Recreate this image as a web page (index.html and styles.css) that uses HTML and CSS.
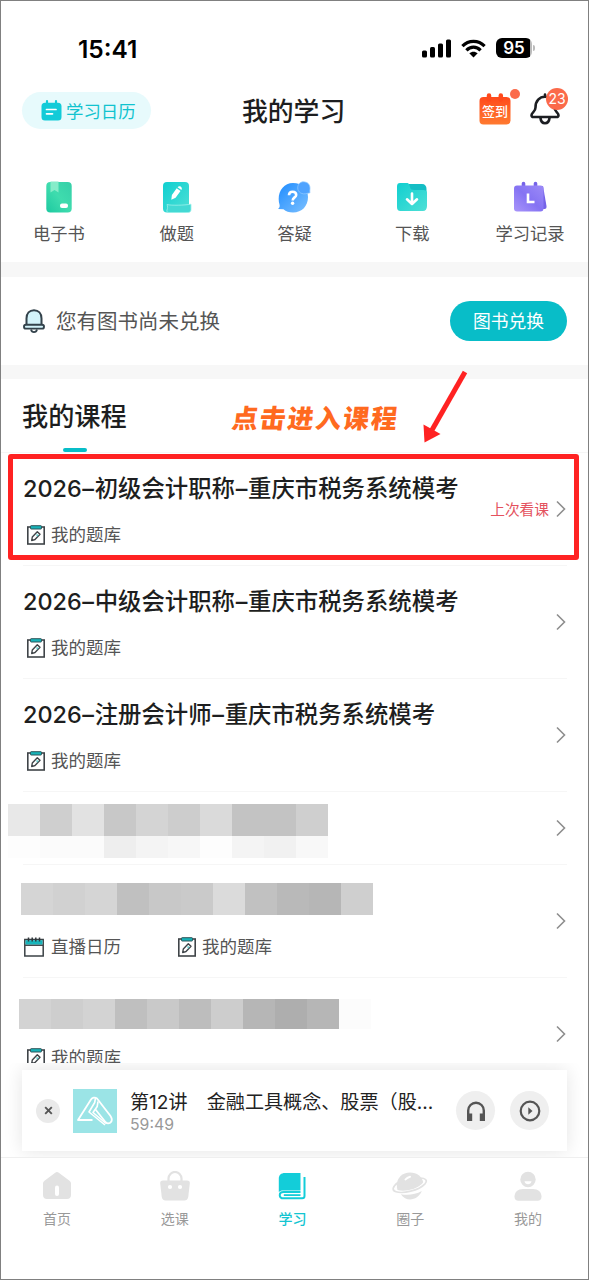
FILE: index.html
```html
<!DOCTYPE html>
<html lang="zh-CN">
<head>
<meta charset="utf-8">
<title>我的学习</title>
<link rel="stylesheet" href="styles.css">
</head>
<body>
<svg class="defs" width="0" height="0" aria-hidden="true">
  <defs>
    <linearGradient id="gGreen" x1="0" y1="1" x2="1" y2="0"><stop offset="0" stop-color="#1cc9a0"/><stop offset=".5" stop-color="#3fdcae"/><stop offset="1" stop-color="#35cfa8"/></linearGradient>
    <linearGradient id="gTeal" x1="0" y1="0" x2="1" y2="1"><stop offset="0" stop-color="#10cfd0"/><stop offset="1" stop-color="#4fe0d6"/></linearGradient>
    <linearGradient id="gBlue" x1="0" y1="0" x2="1" y2="1"><stop offset="0" stop-color="#1e8cff"/><stop offset="1" stop-color="#7cc0ff"/></linearGradient>
    <linearGradient id="gPurple" x1="0" y1="1" x2="1" y2="0"><stop offset="0" stop-color="#a995fa"/><stop offset=".5" stop-color="#8573f3"/><stop offset="1" stop-color="#9c8bf7"/></linearGradient>
    <linearGradient id="gOrange" x1="0" y1="0" x2="0" y2="1"><stop offset="0" stop-color="#ff4a1c"/><stop offset="1" stop-color="#ff7a30"/></linearGradient>
    <symbol id="bank" viewBox="0 0 18 20">
      <rect x=".8" y="2" width="16.400" height="17" fill="#fff" stroke="#3f4448" stroke-width="1.600"/>
      <rect x="3.500" y=".7" width="11" height="3.300" rx=".6" fill="#17b3b8" stroke="#2f555a" stroke-width="1"/>
      <path d="M4.700 15.600l.6-3.600 5-5.200 2.700 2.500-5 5.200z" fill="#fff" stroke="#3f4448" stroke-width="1.400" stroke-linejoin="round"/>
      <path d="M9.500 9.500l1.500 1.400" stroke="#5fd0d0" stroke-width="1.600"/>
    </symbol>
    <symbol id="chev" viewBox="0 0 10 18"><path d="M1 1.500L8.500 9 1 16.500" fill="none" stroke="#8e8e8e" stroke-width="1.600"/></symbol>
  </defs>
</svg>
<div class="phone">
  <div class="status">
    <span class="clock">15:41</span>
    <span class="signals">
      <svg width="29" height="19" viewBox="0 0 29 19"><rect x="0" y="11.500" width="5" height="7" rx="1.500"/><rect x="8" y="8" width="5" height="10.500" rx="1.500"/><rect x="16" y="4.500" width="5" height="14" rx="1.500"/><rect x="24" y=".5" width="5" height="18" rx="1.500"/></svg>
      <svg class="wifi" width="25" height="19" viewBox="0 0 25 19"><g fill="none" stroke="#000" stroke-width="3.200"><path d="M1.400 7.200C7.600.8 17.400.8 23.600 7.200"/><path d="M5.400 11.300c4-4.200 10.200-4.200 14.200 0"/></g><path d="M8.300 14.300c2.500-2.100 5.900-2.100 8.400 0L12.500 18.500z"/></svg>
      <span class="battery"><span class="level">95</span><i class="cap"></i></span>
    </span>
  </div>

  <header class="head">
    <a class="cal-pill">
      <svg width="21" height="21" viewBox="0 0 21 21"><path d="M4 2.800h13a3.500 3.500 0 0 1 3.500 3.500V17a3.500 3.500 0 0 1-3.500 3.500H4A3.500 3.500 0 0 1 .5 17V6.300A3.500 3.500 0 0 1 4 2.800z" fill="#12cbd8"/><path d="M6 1.200v3M15 1.200v3" stroke="#12cbd8" stroke-width="2.200" stroke-linecap="round"/><path d="M5.500 9.500h9.500M5.500 13.800h6" stroke="#fff" stroke-width="1.700" stroke-linecap="round"/></svg>
      <span>学习日历</span>
    </a>
    <h1>我的学习</h1>
    <span class="sign">
      <svg width="32" height="32" viewBox="0 0 32 32"><rect x=".5" y="4" width="31" height="27.500" rx="4" fill="url(#gOrange)"/><path d="M10 2.500v4M21.800 2.500v4" stroke="#ff4a1c" stroke-width="4.500" stroke-linecap="round"/></svg>
      <b>签到</b><i class="dot"></i>
    </span>
    <span class="bell">
      <svg width="30" height="32" viewBox="0 0 30 32"><g fill="none" stroke="#1c1e22" stroke-width="2.600" stroke-linejoin="round" stroke-linecap="round"><path d="M15 1.500v2M5.500 14.500C5.500 8 9.500 3.800 15 3.800S24.500 8 24.500 14.500c0 4.500 4 5 4 7.700 0 1.200-1 1.800-2 1.800H3.500c-1 0-2-.6-2-1.800 0-2.700 4-3.200 4-7.700z"/><path d="M10.500 25c.3 3 2 5.200 4.500 5.200s4.200-2.200 4.500-5.200"/></g></svg>
      <i class="count">23</i>
    </span>
  </header>

  <nav class="quick">
    <a><svg width="26" height="32" viewBox="0 0 26 32"><rect x=".3" y="1" width="25.400" height="30.500" rx="4" fill="url(#gGreen)"/><path d="M4.500.5h8v11l-4-2.500-4 2.500z" fill="#86ecc9"/><rect x="14" y="22.500" width="8" height="4.500" rx="2" fill="#fff"/></svg><span>电子书</span></a>
    <a><svg width="30" height="32" viewBox="0 0 30 32"><rect x="1" y="1" width="26" height="30.500" rx="4" fill="url(#gTeal)"/><path d="M5 23.500c5 1.200 17 .8 24-.3v5.300c0 2-1.200 3-3 3H7c-1.800 0-2.600-1-2-2.500.8-2 .8-3.500 0-5.500z" fill="#43d9d4" stroke="#9bf0ea" stroke-width=".8"/><path d="M9.300 18.800l.6-4.800L14.700 7.300l3.800 2.700-4.900 6.800zM15.600 6.200c.8-1.100 2.200-1.300 3.300-.5s1.300 2.100.5 3.200z" fill="#fff"/></svg><span>做题</span></a>
    <a><svg width="34" height="32" viewBox="0 0 34 32"><path d="M16 2c9 0 15 6 15 14 0 9-6 15.500-15 15.500-4 0-7-1.200-9.500-3.300L1 28c1.500-1.200 1.800-2.300 1.600-4C-.8 13 5.500 2 16 2z" fill="url(#gBlue)"/><path d="M26.500.8c4 0 6.500 2.800 6.500 6.200 0 1.700-.3 2.600 0 4.800l-3 .6c-5 1.600-9.300-1.200-9.300-5.600C20.700 3.200 23.200.8 26.500.8z" fill="#4fa3ff" stroke="#93ccff" stroke-width=".7"/><path d="M12 14.200c0-2.300 1.600-3.500 3.600-3.500s3.600 1.200 3.600 3.200c0 2.500-3.500 2.500-3.500 5.500" fill="none" stroke="#fff" stroke-width="2.600"/><circle cx="15.600" cy="22.300" r="1.700" fill="#fff"/></svg><span>答疑</span></a>
    <a><svg width="32" height="32" viewBox="0 0 32 32"><path d="M13 3h13c3 0 4.500 2 4.500 5v10H13z" fill="#14bdc4"/><path d="M4 2h7.500c2 0 2 4 3.500 6.200 1 .8 3 .8 12 .8 3 0 4 1 4 3v13c0 3-1.500 5-4 5H4.500C2 30 1 28.500 1 26V5.500C1 3 2 2 4 2z" fill="url(#gTeal)"/><path d="M16 12.500v10M11 18.300l5 4.700 5-4.700" fill="none" stroke="#fff" stroke-width="2.600" stroke-linecap="round" stroke-linejoin="round"/></svg><span>下载</span></a>
    <a><svg width="34" height="32" viewBox="0 0 34 32"><path d="M27 5h3l3.500 20c.3 2-.5 3-2 3H24z" fill="#7563e8"/><path d="M10.500 2.500v5M22.500 2.500v5" stroke="#7563e8" stroke-width="3.600" stroke-linecap="round"/><rect x="1" y="4.500" width="29.500" height="26" rx="3" fill="url(#gPurple)"/><path d="M15 12.500v8.500h6.500" fill="none" stroke="#fff" stroke-width="2.600"/></svg><span>学习记录</span></a>
  </nav>

  <section class="notice">
    <svg width="24" height="24" viewBox="0 0 24 24"><path d="M9 20.500c.4 1.600 1.500 2.600 3 2.600s2.600-1 3-2.600" fill="#fff" stroke="#33424b" stroke-width="1.800"/><path d="M4.500 16V9.500c0-5 3-8.200 7.500-8.200s7.500 3.200 7.500 8.200V16" fill="#d3f3fa" stroke="#33424b" stroke-width="2"/><rect x="2" y="15.800" width="20" height="3.800" rx="1.900" fill="#d3f3fa" stroke="#33424b" stroke-width="1.900"/></svg>
    <p>您有图书尚未兑换</p>
    <button class="redeem">图书兑换</button>
  </section>

  <div class="course-head">
    <h2>我的课程</h2>
  </div>

  <main class="courses">
    <article class="course">
      <div class="info"><h3>2026<i>–</i>初级会计职称<i>–</i>重庆市税务系统模考</h3><div class="links"><a class="link"><svg width="18" height="20"><use href="#bank"/></svg>我的题库</a></div></div>
      <span class="last">上次看课</span><svg class="chev" width="10" height="18"><use href="#chev"/></svg>
    </article>
    <article class="course">
      <div class="info"><h3>2026<i>–</i>中级会计职称<i>–</i>重庆市税务系统模考</h3><div class="links"><a class="link"><svg width="18" height="20"><use href="#bank"/></svg>我的题库</a></div></div>
      <svg class="chev" width="10" height="18"><use href="#chev"/></svg>
    </article>
    <article class="course">
      <div class="info"><h3>2026<i>–</i>注册会计师<i>–</i>重庆市税务系统模考</h3><div class="links"><a class="link"><svg width="18" height="20"><use href="#bank"/></svg>我的题库</a></div></div>
      <svg class="chev" width="10" height="18"><use href="#chev"/></svg>
    </article>
    <article class="course short">
      <div class="info"><svg class="mosaic m1" width="320" height="54" shape-rendering="crispEdges"><path fill="#e8e8e8" d="M0 0h32v32H0z"/><path fill="#cfcfcf" d="M32 0h32v32H32z"/><path fill="#e2e2e2" d="M64 0h32v32H64z"/><path fill="#c8c8c8" d="M96 0h32v32H96z"/><path fill="#d4d4d4" d="M128 0h32v32h-32z"/><path fill="#cdcdcd" d="M160 0h32v32h-32z"/><path fill="#dadada" d="M192 0h32v32h-32z"/><path fill="#c3c3c3" d="M224 0h64v32h-64z"/><path fill="#cfcfcf" d="M288 0h32v32h-32z"/><path fill="#fdfdfd" d="M0 32h32v22H0z"/><path fill="#fbfbfb" d="M32 32h64v22H32z"/><path fill="#eee" d="M96 32h32v22H96z"/><path fill="#f4f4f4" d="M128 32h32v22h-32z"/><path fill="#f7f7f7" d="M160 32h32v22h-32z"/><path fill="#fdfdfd" d="M192 32h32v22h-32z"/><path fill="#f4f4f4" d="M224 32h32v22h-32z"/><path fill="#f1f1f1" d="M256 32h32v22h-32z"/><path fill="#f8f8f8" d="M288 32h32v22h-32z"/></svg></div>
      <svg class="chev" width="10" height="18"><use href="#chev"/></svg>
    </article>
    <article class="course">
      <div class="info"><svg class="mosaic m2" width="352" height="32" shape-rendering="crispEdges"><path fill="#d5d5d5" d="M0 0h32v32H0z"/><path fill="#d1d1d1" d="M32 0h32v32H32z"/><path fill="#d5d5d5" d="M64 0h32v32H64z"/><path fill="#c0c0c0" d="M96 0h32v32H96z"/><path fill="#c8c8c8" d="M128 0h32v32h-32z"/><path fill="#cacaca" d="M160 0h32v32h-32z"/><path fill="#dbdbdb" d="M192 0h32v32h-32z"/><path fill="#c1c1c1" d="M224 0h32v32h-32z"/><path fill="#b9b9b9" d="M256 0h32v32h-32z"/><path fill="#b6b6b6" d="M288 0h32v32h-32z"/><path fill="#cfcfcf" d="M320 0h32v32h-32z"/></svg>
        <div class="links two"><a class="link live"><svg width="20" height="20" viewBox="0 0 20 20"><rect x=".8" y="2.500" width="18.400" height="16.500" fill="#fff" stroke="#3b4246" stroke-width="1.500"/><path d="M1.500 3.200h17v4.500h-17z" fill="#17b5bb"/><path d="M1 8.300h18" stroke="#3b4246" stroke-width="1.300"/><path d="M4.500.5v4M8.200.5v4M11.800.5v4M15.500.5v4" stroke="#30373b" stroke-width="1.500"/></svg>直播日历</a><a class="link"><svg width="18" height="20"><use href="#bank"/></svg>我的题库</a></div></div>
      <svg class="chev" width="10" height="18"><use href="#chev"/></svg>
    </article>
    <article class="course">
      <div class="info"><svg class="mosaic m3" width="352" height="30" shape-rendering="crispEdges"><path fill="#d3d3d3" d="M0 0h32v30H0z"/><path fill="#cecece" d="M32 0h32v30H32z"/><path fill="#d3d3d3" d="M64 0h32v30H64z"/><path fill="#bfbfbf" d="M96 0h32v30H96z"/><path fill="#c9c9c9" d="M128 0h32v30h-32z"/><path fill="#bdbdbd" d="M160 0h32v30h-32z"/><path fill="#cdcdcd" d="M192 0h32v30h-32z"/><path fill="#b6b6b6" d="M224 0h32v30h-32z"/><path fill="#aeaeae" d="M256 0h32v30h-32z"/><path fill="#b6b6b6" d="M288 0h32v30h-32z"/><path fill="#fcfcfc" d="M320 0h32v30h-32z"/></svg><div class="links"><a class="link"><svg width="18" height="20"><use href="#bank"/></svg>我的题库</a></div></div>
      <svg class="chev" width="10" height="18"><use href="#chev"/></svg>
    </article>
  </main>

  <div class="dock">
    <div class="player">
      <span class="close"><svg width="9" height="9" viewBox="0 0 9 9"><path d="M1.200 1.200l6.600 6.600M7.800 1.200L1.200 7.800" stroke="#555" stroke-width="1.900"/></svg></span>
      <svg class="cover" width="44" height="44" viewBox="0 0 44 44"><rect width="44" height="44" fill="#9be4e6"/><g fill="none" stroke="#fff" stroke-width="1.800" stroke-linejoin="round"><path d="M19.500 31H5L18 10.500c1.300-2 4-2.500 6-1L37.500 27c1.800 2.800 2 5-.3 6.800-1.700 1-3.400.6-4.600-.6L22.500 20.500"/><path d="M22.500 9l-.8 4.500L16 23l16 13M25 12.500l-.8 5L20 23.500 33 34.500" stroke-width="1.600"/></g></svg>
      <div class="track"><strong>第12讲　金融工具概念、股票（股...</strong><time>59:49</time></div>
      <span class="round"><svg width="20" height="20" viewBox="0 0 20 20"><path d="M2.200 14V9.500a7.800 7.800 0 0 1 15.600 0V14" fill="none" stroke="#555" stroke-width="2.400"/><path d="M1 12.500h5.200V20H1zM13.800 12.500H19V20h-5.200z" fill="#555"/></svg></span>
      <span class="round play"><svg width="22" height="22" viewBox="0 0 22 22"><circle cx="11" cy="11" r="9.300" fill="none" stroke="#555" stroke-width="2.200"/><path d="M9.300 7.200l4.200 3.800-4.200 3.800z" fill="#555"/></svg></span>
    </div>
  </div>

  <footer class="tabs">
    <a><svg width="28" height="30" viewBox="0 0 28 30"><path d="M12.200 1.700c1.200-.9 2.400-.9 3.600 0l10.700 8c1 .8 1.500 1.800 1.500 3V24c0 2.500-1.500 4-4 4H4c-2.500 0-4-1.500-4-4V12.700c0-1.200.5-2.200 1.500-3z" fill="#e2e2e2"/><rect x="12" y="14.500" width="4" height="10.500" rx="2" fill="#fff"/></svg><span>首页</span></a>
    <a><svg width="30" height="30" viewBox="0 0 30 30"><path d="M8.500 11V7.500a6.500 6.500 0 0 1 13 0V11" fill="none" stroke="#e2e2e2" stroke-width="2.200"/><path d="M3 9.500h24c2 0 3 1.200 2.800 3l-1.500 13c-.3 2.500-1.600 4-4 4H5.700c-2.400 0-3.700-1.500-4-4l-1.500-13c-.2-1.800.8-3 2.800-3z" fill="#e2e2e2"/><circle cx="10" cy="16" r="2.100" fill="#fff"/><circle cx="20" cy="16" r="2.100" fill="#fff"/></svg><span>选课</span></a>
    <a class="on"><svg width="28" height="30" viewBox="0 0 28 30"><path d="M7 2h15.500v17.500H5c-1.800 0-3.200.5-4.200 1.600V8c0-4 2.200-6 6.200-6z" fill="#13cdd9"/><path d="M26.500 6v19c0 1.500-.8 2.300-2.300 2.300H5.500c-5 0-5-6.300 0-6.300h17" fill="none" stroke="#13cdd9" stroke-width="2"/><path d="M5.800 24.100h16.700" stroke="#13cdd9" stroke-width="1.800"/></svg><span>学习</span></a>
    <a><svg width="36" height="30" viewBox="0 0 36 30"><path d="M4.800 14C4.800 6.800 10.500 1.500 18 1.500c7 0 12 4 13.200 9.800C27.500 17 14 21.500 5.500 19c-.5-1.500-.7-3.200-.7-5z" fill="#e2e2e2"/><path d="M8.800 23.200c7.500 1.500 14.700.2 21-3.200-3.800 9.500-15.500 11.500-21 3.200z" fill="#e2e2e2"/><path d="M6 11.500C.5 15.500-.5 19.500 4 20.800c7 2 22.500-1 29-8 3-3.500.3-6-5.500-5.800" fill="none" stroke="#e2e2e2" stroke-width="1.700"/><path d="M13.500 8.500c1.200-1.500 2.800-2.400 4.500-2.800" stroke="#fff" stroke-width="2" stroke-linecap="round" fill="none"/></svg><span>圈子</span></a>
    <a><svg width="28" height="30" viewBox="0 0 28 30"><circle cx="14" cy="8.500" r="7.700" fill="#e2e2e2"/><path d="M10.500 10.200h7c-.5 4-6.500 4-7 0z" fill="#fff"/><path d="M9 18h10c5 0 8.500 3 8.500 7.500 0 3-1.500 4.300-4 4.300h-19C2 29.800.5 28.500.5 25.500.5 21 4 18 9 18z" fill="#e2e2e2"/></svg><span>我的</span></a>
  </footer>

  <div class="mark-box"></div>
  <div class="mark-text">点击进入课程</div>
  <svg class="mark-arrow" width="46" height="74" viewBox="0 0 46 74"><path d="M42 2L9 60" stroke="#ff2222" stroke-width="5"/><path d="M0.500 54.500L1.500 72.500 17.500 64z" fill="#ff2222"/></svg>
</div>
</body>
</html>
```
FILE: styles.css
```css
* { box-sizing: border-box; }
body { margin: 0; background: #fff; font-family: "Inter", "Noto Sans CJK SC", sans-serif; color: #222; }
h1, h2, h3, p { margin: 0; font-weight: 500; }
i { font-style: normal; }
svg { display: block; flex: none; }
.defs { position: absolute; }
.phone { position: relative; width: 589px; height: 1280px; border: 1px solid #808080; overflow: hidden; display: flex; flex-direction: column; background: #fff; }
.phone > * { flex: none; }

.status { height: 91px; padding: 33px 53px 0 77px; display: flex; justify-content: space-between; align-items: flex-start; }
.clock { font-size: 24.500px; line-height: 30px; font-weight: 600; color: #000; }
.signals { display: flex; align-items: center; height: 28px; }
.wifi { margin: 0 10px 0 10px; }
.battery { display: flex; align-items: center; }
.level { width: 36px; height: 20px; border-radius: 6px; background: linear-gradient(90deg, #000 34.500px, #bbb 34.500px); color: #fff; font-size: 17px; font-weight: 600; line-height: 20px; text-align: center; }
.cap { width: 2px; height: 6px; margin-left: 1px; border-radius: 0 3px 3px 0; background: #bbb; }

.head { height: 85px; padding: 0 20px 0 21px; display: flex; align-items: flex-start; }
.cal-pill { width: 129px; height: 37px; border-radius: 19px; background: #e7fafc; color: #12c3cf; display: flex; align-items: center; padding-left: 19px; font-size: 17.400px; gap: 4px; }
.head h1 { margin-left: 91px; font-size: 25.800px; line-height: 39px; width: 104px; white-space: nowrap; color: #1d1e20; }
.sign { position: relative; margin: 1px 0 0 133px; }
.sign b { position: absolute; left: 0; top: 8px; width: 32px; text-align: center; font-size: 13px; line-height: 20px; color: #fff; font-weight: 500; white-space: nowrap; }
.dot { position: absolute; left: 31px; top: -4px; width: 10px; height: 10px; border-radius: 50%; background: #fb6a4a; }
.bell { position: relative; margin: 1px 0 0 19px; }
.count { position: absolute; left: 16px; top: -5px; width: 22px; height: 22px; border-radius: 50%; background: #fb6a4a; color: #fff; font-size: 14px; line-height: 22px; text-align: center; }

.quick { height: 85px; margin: 0 -1px; display: grid; grid-template-columns: repeat(5, 1fr); }
.quick a { display: flex; flex-direction: column; align-items: center; gap: 8px; padding-top: 4px; font-size: 17.300px; line-height: 26px; color: #555; }

.notice { height: 117px; border: solid #f7f7f7; border-width: 15px 0 14px; display: flex; align-items: center; padding: 0 21px; }
.notice p { margin: 2px 0 0 10px; font-size: 20.500px; line-height: 30px; font-weight: 400; color: #555; }
.redeem { margin-left: auto; width: 117px; height: 40px; border: 0; border-radius: 20px; background: #08bdc8; color: #fff; font: 17.800px "Noto Sans CJK SC", sans-serif; padding: 0 0 2px; }

.course-head { height: 74px; padding: 19px 21px 0; border-bottom: 1px solid #f6f6f6; }
.course-head h2 { width: 106px; font-size: 26.200px; line-height: 38px; color: #1d1e20; white-space: nowrap; }
.course-head h2::after { content: ""; display: block; width: 24px; height: 4px; margin: 12px 0 0 41px; border-radius: 2px; background: #08bdc8; }

.courses { height: 610px; padding: 0 21px 0 22px; overflow: hidden; }
.course { height: 113px; border-bottom: 1px solid #f6f6f6; display: flex; align-items: center; }
.course:nth-child(3) { height: 113px; }
.course.short { height: 73px; }
.info { flex: 1; align-self: stretch; display: flex; flex-direction: column; }
.info h3 { margin-top: 19px; font-size: 23.400px; line-height: 34px; color: #1d1e20; white-space: nowrap; }
.info h3 i { display: inline-block; width: 13px; text-align: center; }
.links { margin: 16px 0 0 4px; display: flex; }
.link { display: flex; align-items: center; gap: 6px; font-size: 17.500px; line-height: 26px; color: #555; }
.mosaic.m1 { margin: 12px 0 0 -15px; }
.mosaic.m2 { margin: 18px 0 0 -2px; }
.mosaic.m3 { margin: 21px 0 0 -4px; }
.links.two { margin: 19px 0 0 1px; gap: 57px; }
.link.live { gap: 7px; }
.last { font-size: 14.700px; color: #e4525e; margin: -2px 7px 0 0; }
.chev { margin-right: 1px; }

.dock { height: 95px; padding: 7px 21px 0; background: #fff; overflow: hidden; border-bottom: 1px solid #efefef; }
.player { height: 81px; background: #fff; box-shadow: 0 0 18px rgba(0,0,0,.11); display: flex; align-items: center; padding: 0 18px 0 14px; }
.close { width: 24px; height: 24px; border-radius: 50%; background: #eaeaea; display: flex; align-items: center; justify-content: center; }
.cover { margin: 1px 0 0 13px; }
.track { margin-left: 13px; width: 309px; display: flex; flex-direction: column; white-space: nowrap; }
.track strong { font-size: 19.100px; font-weight: 400; line-height: 27px; color: #222; }
.track time { font-size: 15.800px; line-height: 17px; color: #999; }
.round { width: 39px; height: 39px; border-radius: 50%; background: #efefef; display: flex; align-items: center; justify-content: center; margin-left: auto; }
.round.play { margin-left: 15px; }

.tabs { height: 120px; margin: 0 1px 0 -3px; display: grid; grid-template-columns: repeat(5, 1fr); padding-top: 13px; }
.tabs a { display: flex; flex-direction: column; align-items: center; gap: 8px; font-size: 14px; line-height: 20px; color: #999; }
.tabs .on { color: #13c5d1; font-weight: 500; }

.mark-box { position: absolute; left: 7px; top: 453px; width: 571px; height: 106px; border: 5px solid #ff2222; border-radius: 3px; }
.mark-text { position: absolute; left: 231px; top: 398px; font-size: 26px; letter-spacing: 1.800px; line-height: 40px; font-weight: 900; color: #ff6a1f; transform: skewX(-7deg); white-space: nowrap; }
.mark-arrow { position: absolute; left: 422px; top: 369px; }
```
